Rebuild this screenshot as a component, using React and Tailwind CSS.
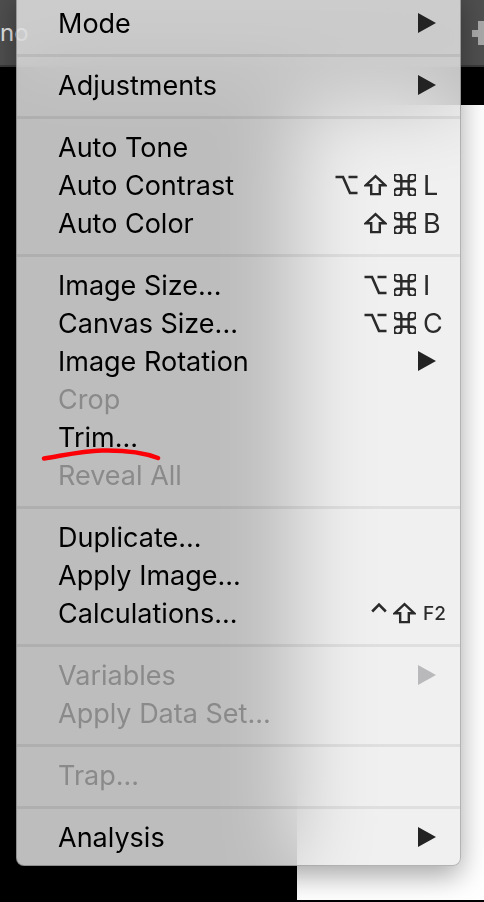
import React from 'react';

// modifier key symbols, drawn to the size they have in the macOS menu
const OptionKey = () => (
  <svg width="23" height="20" viewBox="0 0 23 20">
    <path d="M0.5 2 H8 L15 18 H22.5 M13.5 2 H22.5" stroke="#2a2a2a" strokeWidth="2.6" fill="none" />
  </svg>
);

const ShiftKey = () => (
  <svg width="24" height="22" viewBox="0 0 24 22">
    <path
      d="M12 1.8 L22 11.2 H16.5 V20.5 H7.5 V11.2 H2 Z"
      stroke="#2a2a2a"
      strokeWidth="2.5"
      strokeLinejoin="miter"
      fill="none"
    />
  </svg>
);

const CommandKey = () => (
  <svg width="22" height="22" viewBox="3 3 18 18">
    <path
      d="M15 6v12a3 3 0 1 0 3-3H6a3 3 0 1 0 3 3V6a3 3 0 1 0-3 3h12a3 3 0 1 0-3-3"
      stroke="#2a2a2a"
      strokeWidth="2"
      fill="none"
    />
  </svg>
);

const ControlKey = () => (
  <svg width="16" height="22" viewBox="0 0 16 22">
    <polyline points="1.2,9.5 8,2.5 14.8,9.5" stroke="#2a2a2a" strokeWidth="2.6" fill="none" />
  </svg>
);

const modIcons = {
  opt: <OptionKey />,
  shift: <ShiftKey />,
  cmd: <CommandKey />,
  ctrl: <ControlKey />,
};

const sections = [
  [{ label: 'Mode', arrow: true }],
  [{ label: 'Adjustments', arrow: true }],
  [
    { label: 'Auto Tone' },
    { label: 'Auto Contrast', mods: ['opt', 'shift', 'cmd'], keyName: 'L' },
    { label: 'Auto Color', mods: ['shift', 'cmd'], keyName: 'B' },
  ],
  [
    { label: 'Image Size...', mods: ['opt', 'cmd'], keyName: 'I' },
    { label: 'Canvas Size...', mods: ['opt', 'cmd'], keyName: 'C' },
    { label: 'Image Rotation', arrow: true },
    { label: 'Crop', disabled: true },
    { label: 'Trim...', marked: true },
    { label: 'Reveal All', disabled: true },
  ],
  [
    { label: 'Duplicate...' },
    { label: 'Apply Image...' },
    { label: 'Calculations...', mods: ['ctrl', 'shift'], keyName: 'F2', smallKey: true },
  ],
  [
    { label: 'Variables', disabled: true, arrow: true },
    { label: 'Apply Data Set...', disabled: true },
  ],
  [{ label: 'Trap...', disabled: true }],
  [{ label: 'Analysis', arrow: true }],
];

const Arrow = ({ disabled }) => (
  <svg width="18" height="20" viewBox="0 0 18 20" className="mr-[10px]">
    <polygon points="0,0 18,10 0,20" fill={disabled ? '#b9b9bb' : '#232323'} />
  </svg>
);

const MenuRow = ({ item }) => (
  <div className="relative flex h-[38px] items-center pl-[41px] pr-[14px]">
    <span
      className={
        'flex-1 text-[27px] leading-none ' +
        (item.disabled ? 'text-[#8a8a8a]' : 'text-black')
      }
    >
      {item.label}
    </span>
    {item.arrow && <Arrow disabled={item.disabled} />}
    {item.mods && (
      <div className="flex items-center text-[#2b2b2b]">
        {item.mods.map((m, i) => (
          <span key={i} className="ml-[6px] flex w-[23px] justify-end">
            {modIcons[m]}
          </span>
        ))}
        <span
          className={
            'ml-[7px] w-[23px] leading-none ' +
            (item.smallKey ? 'text-[19px] font-medium' : 'text-[27px]')
          }
        >
          {item.keyName}
        </span>
      </div>
    )}
    {item.marked && (
      <svg
        width="124"
        height="16"
        viewBox="0 0 124 16"
        className="absolute left-[22px] top-[30px]"
      >
        <path
          d="M5 10.5 C 22 8, 42 3, 63 2.5 C 86 2, 106 5, 119 10"
          stroke="#fb0007"
          strokeWidth="4.5"
          strokeLinecap="round"
          fill="none"
        />
      </svg>
    )}
  </div>
);

export default function App() {
  return (
    <div className="relative h-[902px] w-[484px] overflow-hidden bg-black [font-family:Inter,'Liberation_Sans',sans-serif]">
      <div className="flex h-[67px] items-center justify-between border-b-2 border-[#3a3a3a] bg-[#4f4f4f]">
        <span className="text-[24px] text-[#e2e2e2]">no</span>
        <svg width="12" height="24" viewBox="0 0 12 24">
          <rect x="6" y="0" width="6" height="24" fill="#a9a9a9" />
          <rect x="0" y="9" width="12" height="7" fill="#a9a9a9" />
        </svg>
      </div>
      <div className="h-[38px]" />
      <div className="flex h-[795px]">
        <div className="w-[297px]" />
        <div className="flex-1 bg-white" />
      </div>

      <div className="absolute left-[16px] top-[-10px] w-[445px] rounded-b-lg border border-black/25 bg-[rgba(236,236,238,0.8)] pt-[13px] pb-[9px] shadow-[0_10px_28px_rgba(0,0,0,0.35)] backdrop-blur-2xl">
        {sections.map((sec, si) => (
          <div key={si}>
            {si > 0 && <div className="mt-[12px] mb-[9px] h-[3px] bg-black/[0.07]" />}
            {sec.map((item) => (
              <MenuRow key={item.label} item={item} />
            ))}
          </div>
        ))}
      </div>
    </div>
  );
}
